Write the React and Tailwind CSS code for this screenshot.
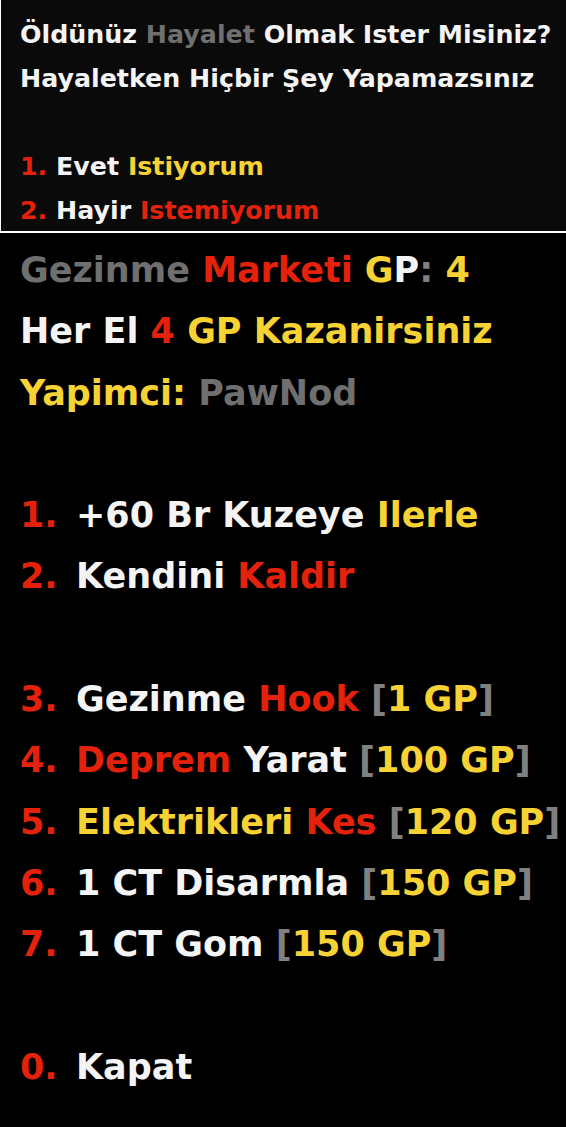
const W = ({ children }) => <span className="text-[#f4f4f4]">{children}</span>;
const R = ({ children }) => <span className="text-[#e4220b]">{children}</span>;
const Y = ({ children }) => <span className="text-[#f6d235]">{children}</span>;
const G = ({ children }) => <span className="text-[#6f6f6f]">{children}</span>;
const B = ({ children }) => <span className="text-[#808080]">{children}</span>;

const Blank = () => <div>&nbsp;</div>;

// menu number, fixed width so item text lines up like the game HUD
const N = ({ children }) => (
  <span className="inline-block w-[56px] text-[#e4220b]">{children}</span>
);

export default function App() {
  return (
    <div className="min-h-[1127px] w-[566px] bg-black font-['DejaVu_Sans',sans-serif] font-bold">
      <div className="h-[233px] border-b-2 border-l border-white bg-[#0a0a0a] pl-[19px] pt-[13px] text-[25.3px] leading-[44px]">
        <div>
          <W>Öldünüz</W> <G>Hayalet</G> <W>Olmak Ister Misiniz?</W>
        </div>
        <div>
          <W>Hayaletken Hiçbir Şey Yapamazsınız</W>
        </div>
        <Blank />
        <div>
          <R>1.</R> <W>Evet</W> <Y>Istiyorum</Y>
        </div>
        <div>
          <R>2.</R> <W>Hayir</W> <R>Istemiyorum</R>
        </div>
      </div>

      <div className="pl-[20px] pt-[7px] text-[35px] leading-[61.3px]">
        <div>
          <G>Gezinme</G> <R>Marketi</R> <Y>G</Y>
          <W>P</W>
          <B>:</B> <Y>4</Y>
        </div>
        <div>
          <W>Her El</W> <R>4</R> <Y>GP Kazanirsiniz</Y>
        </div>
        <div>
          <Y>Yapimci:</Y> <G>PawNod</G>
        </div>
        <Blank />
        <div>
          <N>1.</N>
          <W>+60 Br Kuzeye</W> <Y>Ilerle</Y>
        </div>
        <div>
          <N>2.</N>
          <W>Kendini</W> <R>Kaldir</R>
        </div>
        <Blank />
        <div>
          <N>3.</N>
          <W>Gezinme</W> <R>Hook</R> <B>[</B>
          <Y>1 GP</Y>
          <B>]</B>
        </div>
        <div>
          <N>4.</N>
          <R>Deprem</R> <W>Yarat</W> <B>[</B>
          <Y>100 GP</Y>
          <B>]</B>
        </div>
        <div>
          <N>5.</N>
          <Y>Elektrikleri</Y> <R>Kes</R> <B>[</B>
          <Y>120 GP</Y>
          <B>]</B>
        </div>
        <div>
          <N>6.</N>
          <W>1 CT Disarmla</W> <B>[</B>
          <Y>150 GP</Y>
          <B>]</B>
        </div>
        <div>
          <N>7.</N>
          <W>1 CT Gom</W> <B>[</B>
          <Y>150 GP</Y>
          <B>]</B>
        </div>
        <Blank />
        <div>
          <N>0.</N>
          <W>Kapat</W>
        </div>
      </div>
    </div>
  );
}
